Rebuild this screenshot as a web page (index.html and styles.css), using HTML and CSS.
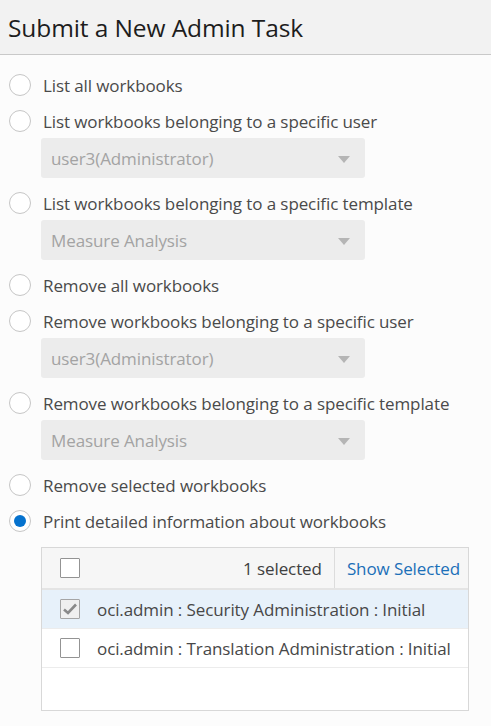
FILE: index.html
```html
<!DOCTYPE html>
<html lang="en">
<head>
  <meta charset="UTF-8" />
  <meta name="viewport" content="width=device-width, initial-scale=1.0"/>
  <title>Submit a New Admin Task</title>
  <link rel="stylesheet" href="styles.css">
</head>
<body>
  <div class="dialog-header">
    <h1 class="dialog-title">Submit a New Admin Task</h1>
  </div>

  <div class="dialog-body">
    <div class="option"><span class="radio"></span>List all workbooks</div>

    <div class="option"><span class="radio"></span>List workbooks belonging to a specific user</div>
    <div class="select">user3(Administrator)<span class="arrow"></span></div>

    <div class="option"><span class="radio"></span>List workbooks belonging to a specific template</div>
    <div class="select">Measure Analysis<span class="arrow"></span></div>

    <div class="option"><span class="radio"></span>Remove all workbooks</div>

    <div class="option"><span class="radio"></span>Remove workbooks belonging to a specific user</div>
    <div class="select">user3(Administrator)<span class="arrow"></span></div>

    <div class="option"><span class="radio"></span>Remove workbooks belonging to a specific template</div>
    <div class="select">Measure Analysis<span class="arrow"></span></div>

    <div class="option"><span class="radio"></span>Remove selected workbooks</div>
    <div class="option"><span class="radio checked"></span>Print detailed information about workbooks</div>

    <!-- Workbook list -->
    <div class="workbook-table">
      <div class="table-head">
        <div class="cell-check"><span class="checkbox"></span></div>
        <div class="selected-count">1 selected</div>
        <div class="show-selected">Show Selected</div>
      </div>
      <div class="table-row active">
        <div class="cell-check">
          <span class="checkbox ticked">
            <svg width="16" height="14" viewBox="0 0 16 14"><path d="M2 7.5 L6 11 L14 2.5" fill="none" stroke="#8a8a8a" stroke-width="2.6"/></svg>
          </span>
        </div>
        <div class="row-label">oci.admin : Security Administration : Initial</div>
      </div>
      <div class="table-row">
        <div class="cell-check"><span class="checkbox"></span></div>
        <div class="row-label">oci.admin : Translation Administration : Initial</div>
      </div>
    </div>
  </div>
</body>
</html>
```

FILE: styles.css
```css
body {
  margin: 0;
  background-color: #fcfcfc;
  font-family: "Open Sans", "Noto Sans", sans-serif;
  color: #4a4a4a;
}

.dialog-header {
  height: 54px;
  background-color: #f2f2f2;
  border-bottom: 1px solid #c9c9c9;
  display: flex;
  align-items: center;
  padding-left: 8px;
}

.dialog-title {
  margin: 0;
  font-size: 24.5px;
  font-weight: normal;
  color: #1d1d1d;
  letter-spacing: -0.1px;
}

.dialog-body {
  padding: 13px 8px 0 9px;
  display: flex;
  flex-direction: column;
  align-items: flex-start;
}

.option {
  height: 34px;
  display: flex;
  align-items: center;
  gap: 12px;
  font-size: 17px;
  margin-bottom: 2px;
  letter-spacing: -0.1px;
  white-space: nowrap;
}

.radio {
  width: 20px;
  height: 20px;
  border: 1px solid #c6c6c6;
  border-radius: 50%;
  background: #fff;
  display: flex;
  align-items: center;
  justify-content: center;
  flex-shrink: 0;
}

.radio.checked::after {
  content: "";
  width: 12px;
  height: 12px;
  border-radius: 50%;
  background-color: #0572ce;
}

.select {
  position: relative;
  width: 324px;
  height: 40px;
  margin: -2px 0 8px 32px;
  padding-left: 10px;
  box-sizing: border-box;
  background-color: #ececec;
  border-radius: 3px;
  display: flex;
  align-items: center;
  font-size: 17px;
  letter-spacing: -0.1px;
  color: #a3a3a3;
}

.arrow {
  position: absolute;
  right: 15px;
  top: 18px;
  width: 0;
  height: 0;
  border-left: 6px solid transparent;
  border-right: 6px solid transparent;
  border-top: 7px solid #b5b5b5;
}

.workbook-table {
  width: 428px;
  height: 164px;
  margin: 7px 0 0 32px;
  border: 1px solid #d8d8d8;
  box-sizing: border-box;
  background: #fff;
  font-size: 17px;
  letter-spacing: -0.1px;
}

.table-head {
  height: 42px;
  display: flex;
  align-items: stretch;
  background-color: #f6f6f6;
  border-bottom: 2px solid #e4e4e4;
  box-sizing: border-box;
}

.cell-check {
  width: 55px;
  display: flex;
  align-items: center;
  justify-content: center;
  flex-shrink: 0;
}

.checkbox {
  width: 18px;
  height: 18px;
  border: 1.5px solid #939393;
  border-radius: 1px;
  background: #fff;
  display: flex;
  align-items: center;
  justify-content: center;
}

.checkbox.ticked {
  border-color: #a5a5a5;
  background: #f0f0f0;
}

.selected-count {
  flex: 1;
  display: flex;
  align-items: center;
  justify-content: flex-end;
  padding-right: 12px;
  color: #404040;
  border-right: 1px solid #dcdcdc;
}

.show-selected {
  display: flex;
  align-items: center;
  padding: 0 8px 0 12px;
  color: #1b6fb8;
  white-space: nowrap;
}

.table-row {
  height: 39px;
  display: flex;
  align-items: center;
  border-bottom: 1px solid #ececec;
  box-sizing: border-box;
}

.table-row.active {
  background-color: #e7f1fa;
}

.row-label {
  color: #474747;
  white-space: nowrap;
}
```
